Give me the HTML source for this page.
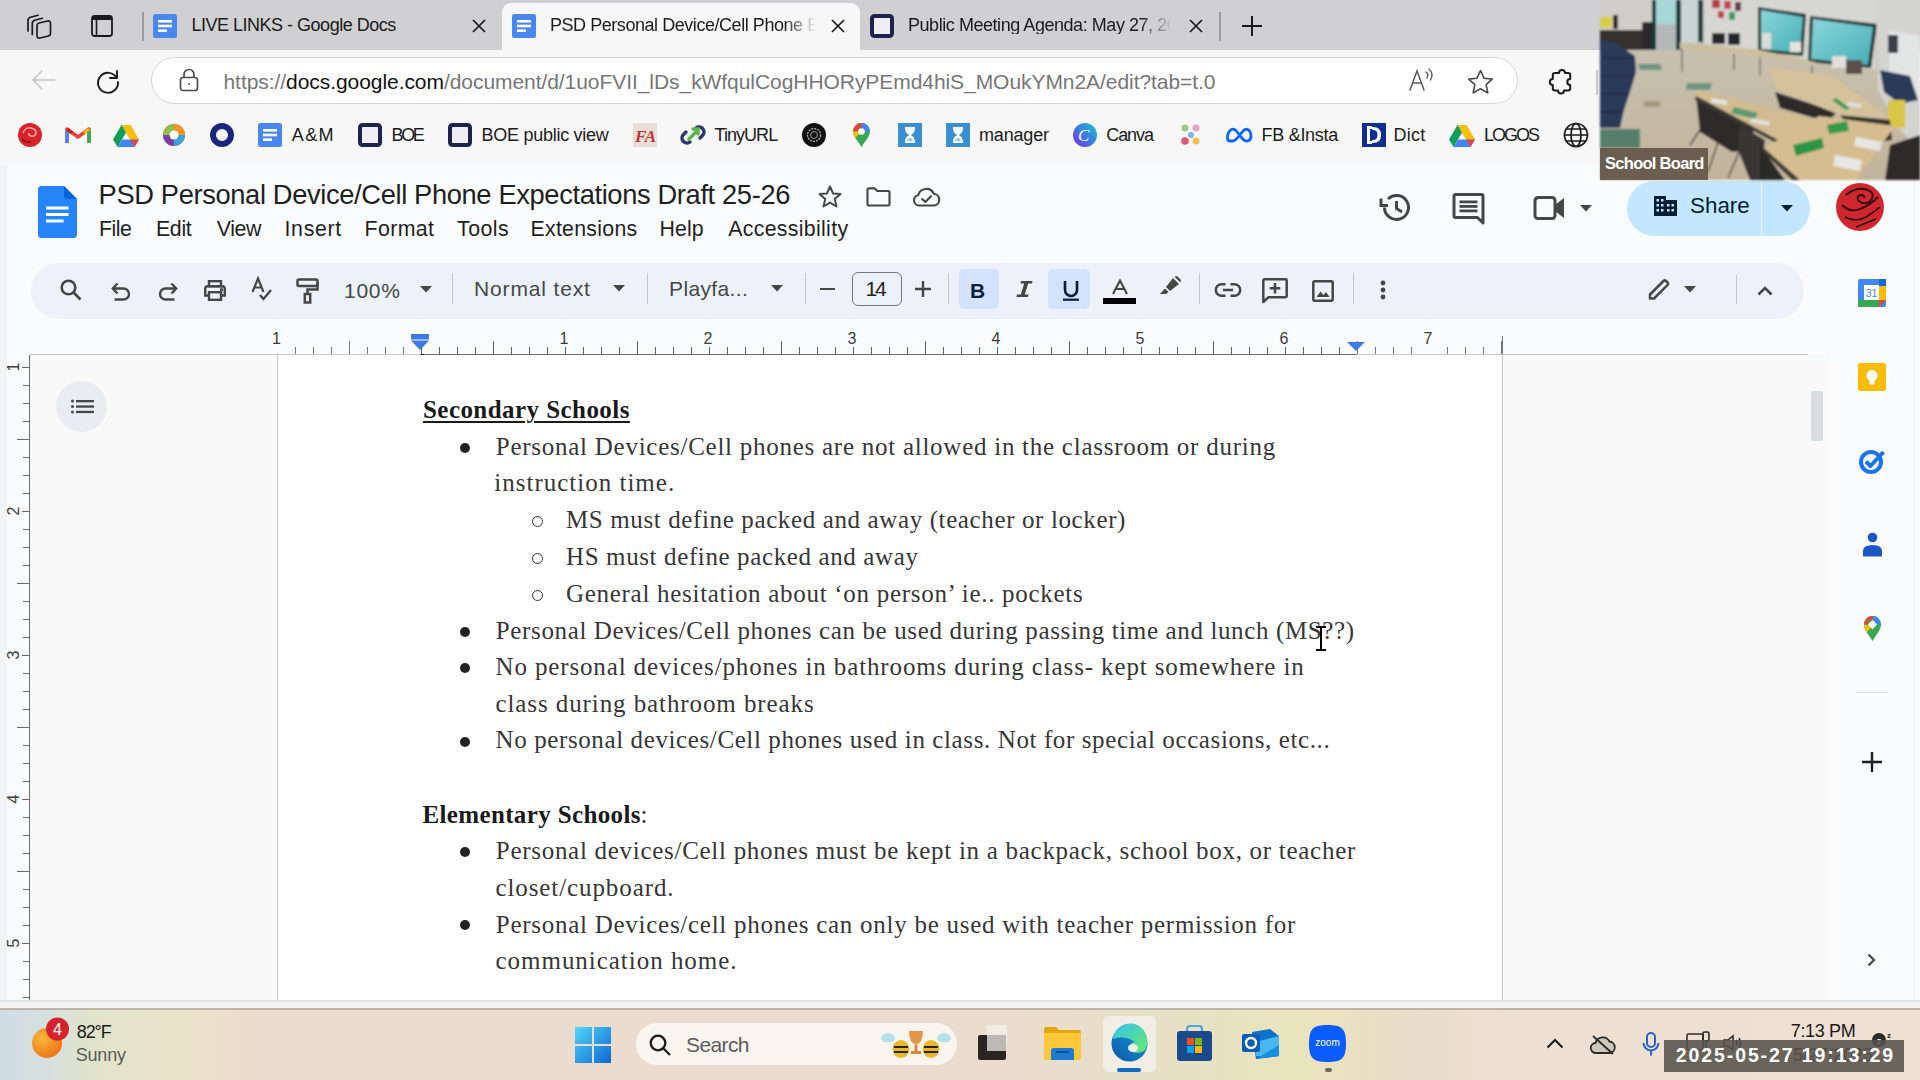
<!DOCTYPE html>
<html><head><meta charset="utf-8">
<style>
*{margin:0;padding:0;box-sizing:border-box}
html,body{width:1920px;height:1080px;overflow:hidden;background:#f9fbfd;font-family:"Liberation Sans",sans-serif;position:relative}
.a{position:absolute}
.t{position:absolute;white-space:nowrap;line-height:1}
svg{position:absolute;overflow:visible}
/* browser chrome */
#tabbar{left:0;top:0;width:1920px;height:50px;background:#d0cfd1}
#addr{left:0;top:50px;width:1920px;height:60px;background:#f7f7f7}
#bm{left:0;top:110px;width:1920px;height:55px;background:#f7f7f7}
#docshead{left:0;top:160px;width:1920px;height:100px;background:#f9fbfd}
#taskbar{left:0;top:1008px;width:1920px;height:72px;background:linear-gradient(90deg,#cfdce4 0px,#d5dfe0 40px,#e0e4cc 90px,#e9e2c8 180px,#ecdccf 260px,#ecdcd0 1000px,#e6dec8 1120px,#eae4bc 1300px,#e8ddcb 1420px,#eedfd3 1520px,#efe0d4 1920px)}
.doc{font-family:"Liberation Serif",serif;color:#333;font-size:24px}
</style></head><body>

<!-- TAB BAR -->
<div id="tabbar" class="a"></div>
<svg style="left:26px;top:13px" width="26" height="26" viewBox="0 0 26 26" fill="none" stroke="#1a1a1a" stroke-width="1.7" stroke-linejoin="round" stroke-linecap="round"><path d="M2 18V7.5Q2 5 4.5 4.3L12 2.2"/><path d="M6.3 21.5V10.5Q6.3 8 8.8 7.3L16.3 5.3"/><path d="M11 12.5Q11 10.5 13 10L21.5 8Q24.5 7.5 24.5 10.5V20.5Q24.5 22.5 22.5 23L14 25Q11 25.5 11 22.5Z"/></svg>
<svg style="left:91px;top:15px" width="22" height="22" viewBox="0 0 22 22"><rect x="1" y="1" width="20" height="20" rx="2.5" fill="none" stroke="#1a1a1a" stroke-width="1.8"/><rect x="1" y="1" width="20" height="4" fill="#1a1a1a"/><rect x="1" y="1" width="4" height="20" fill="none"/><line x1="5.5" y1="5" x2="5.5" y2="21" stroke="#1a1a1a" stroke-width="1.6"/></svg>
<div class="a" style="left:142px;top:12px;width:2px;height:29px;background:#9b9b9d"></div>
<svg style="left:153px;top:14px" width="24" height="24" viewBox="0 0 24 24"><rect x="0" y="0" width="24" height="24" rx="2.5" fill="#4a86f0"/><rect x="5" y="6" width="14" height="2.6" fill="#fff"/><rect x="5" y="10.7" width="14" height="2.6" fill="#fff"/><rect x="5" y="15.4" width="9" height="2.6" fill="#fff"/></svg>
<div class="t" id="tab1" style="left:191.5px;top:16.46px;font-size:18px;color:#1b1b1b;letter-spacing:-0.496px">LIVE LINKS - Google Docs</div>
<svg style="left:472px;top:19px" width="14" height="14" viewBox="0 0 14 14" stroke="#1a1a1a" stroke-width="1.7"><path d="M1 1L13 13M13 1L1 13"/></svg>
<div class="a" style="left:502px;top:3px;width:358px;height:50px;background:#f7f7f7;border-radius:9px 9px 0 0"></div>
<svg style="left:512px;top:14px" width="24" height="24" viewBox="0 0 24 24"><rect x="0" y="0" width="24" height="24" rx="2.5" fill="#4a86f0"/><rect x="5" y="6" width="14" height="2.6" fill="#fff"/><rect x="5" y="10.7" width="14" height="2.6" fill="#fff"/><rect x="5" y="15.4" width="9" height="2.6" fill="#fff"/></svg>
<div class="t" id="tab2" style="left:550px;top:16.46px;font-size:18px;letter-spacing:-0.45px;color:#1b1b1b;width:266px;overflow:hidden;-webkit-mask-image:linear-gradient(90deg,#000 88%,transparent 100%)">PSD Personal Device/Cell Phone Expectations</div>
<svg style="left:831px;top:19px" width="14" height="14" viewBox="0 0 14 14" stroke="#1a1a1a" stroke-width="1.7"><path d="M1 1L13 13M13 1L1 13"/></svg>
<svg style="left:870px;top:14px" width="24" height="24" viewBox="0 0 24 24"><rect x="2" y="2" width="20" height="20" rx="2.5" fill="#eeeef3" stroke="#1c2350" stroke-width="4"/></svg>
<div class="t" id="tab3" style="left:908px;top:16.46px;font-size:18px;letter-spacing:-0.45px;color:#1b1b1b;width:264px;overflow:hidden;-webkit-mask-image:linear-gradient(90deg,#000 88%,transparent 100%)">Public Meeting Agenda: May 27, 2025</div>
<svg style="left:1189px;top:19px" width="14" height="14" viewBox="0 0 14 14" stroke="#1a1a1a" stroke-width="1.7"><path d="M1 1L13 13M13 1L1 13"/></svg>
<div class="a" style="left:1219px;top:12px;width:2px;height:29px;background:#9b9b9d"></div>
<svg style="left:1241px;top:15px" width="22" height="22" viewBox="0 0 22 22" stroke="#1a1a1a" stroke-width="2"><path d="M11 1V21M1 11H21"/></svg>

<!-- ADDRESS BAR -->
<div id="addr" class="a"></div>
<svg style="left:31px;top:69px" width="26" height="22" viewBox="0 0 26 22" fill="none" stroke="#c4c4c4" stroke-width="1.6" stroke-linecap="round" stroke-linejoin="round"><path d="M24 11H2M11 2L2 11L11 20"/></svg>
<svg style="left:95px;top:68px" width="26" height="26" viewBox="0 0 26 26" fill="none" stroke="#1a1a1a" stroke-width="1.9" stroke-linecap="round"><path d="M21.5 9.5A10 10 0 1 0 23 14"/><path d="M22 3V10H15" stroke-linejoin="round"/></svg>
<div class="a" style="left:151px;top:57px;width:1367px;height:47px;background:#fff;border:1.5px solid #d6d6d6;border-radius:24px"></div>
<svg style="left:179px;top:68px" width="20" height="24" viewBox="0 0 20 24" fill="none" stroke="#4d4d4d" stroke-width="1.7"><rect x="1.5" y="9.5" width="17" height="13" rx="2.5"/><path d="M5 9.5V6.5a5 5 0 0 1 10 0V9.5"/><circle cx="10" cy="16" r="1" fill="#4d4d4d" stroke="none"/></svg>
<div class="t" id="url" style="left:223.5px;top:70.72px;font-size:21px;color:#767676;letter-spacing:-0.060px">https://<span style="color:#111">docs.google.com</span>/document/d/1uoFVII_lDs_kWfqulCogHHORyPEmd4hiS_MOukYMn2A/edit?tab=t.0</div>
<svg style="left:1409px;top:68px" width="26" height="24" viewBox="0 0 26 24" fill="none" stroke="#5a5a5a" stroke-width="1.5" stroke-linecap="round"><path d="M1 22L8 3L15 22M3.8 15H12.2"/><path d="M17 4q3 2.5 1 6M20 1q5 4.5 1.5 11"/></svg>
<svg style="left:1467px;top:69px" width="27" height="26" viewBox="0 0 27 26" fill="none" stroke="#4a4a4a" stroke-width="1.6" stroke-linejoin="round"><path d="M13.5 1.5L17 9.2L25.3 10.1L19.1 15.7L20.8 23.9L13.5 19.8L6.2 23.9L7.9 15.7L1.7 10.1L10 9.2Z"/></svg>
<svg style="left:1549px;top:69px" width="24" height="26" viewBox="0 0 24 26" fill="none" stroke="#1a1a1a" stroke-width="2" stroke-linejoin="round"><path d="M5.8 4.1H10A3 3 0 0 1 16 4.1H19.2Q21.2 4.1 21.2 6.1V10.1A2.9 2.9 0 0 0 21.2 15.9V19.4Q21.2 21.4 19.2 21.4H15A3 3 0 0 1 9 21.4H5.8Q3.8 21.4 3.8 19.4V15.9A2.9 2.9 0 0 1 3.8 10.1V6.1Q3.8 4.1 5.8 4.1Z"/></svg><div class="a" style="left:1596px;top:70px;width:1.5px;height:25px;background:#c8c8c8"></div>

<!-- BOOKMARKS -->
<div id="bm" class="a"></div>
<svg style="left:17px;top:122px" width="26" height="26" viewBox="0 0 26 26"><circle cx="13" cy="13" r="12" fill="#d8232a"/><path d="M6 11q2-6 8-5q5 1 5 5q-1 4-5 3q-3-1-2-3" fill="none" stroke="#ffb3b3" stroke-width="1.4"/><path d="M5 17q4 4 9 3" fill="none" stroke="#8a0f14" stroke-width="1.5"/></svg>
<svg style="left:66px;top:126px" width="24" height="18" viewBox="0 0 24 18"><path d="M1 17V3L12 11L23 3V17" fill="none" stroke="#ea4335" stroke-width="3.5" stroke-linejoin="round"/><path d="M1 17V5" stroke="#4285f4" stroke-width="3.5"/><path d="M23 17V5" stroke="#34a853" stroke-width="3.5"/><path d="M1 3L6 7" stroke="#c5221f" stroke-width="3"/><path d="M23 3L18 7" stroke="#fbbc04" stroke-width="3"/></svg>
<svg style="left:113px;top:124px" width="26" height="23" viewBox="0 0 26 23"><path d="M8.5 1H17.5L26 15.5H17Z" fill="#fbbc04"/><path d="M8.5 1L0 15.5L4.5 23L13 8.5Z" fill="#0f9d58"/><path d="M4.5 23H21.5L26 15.5H9Z" fill="#4285f4"/><path d="M8.5 1H17.5L13 8.5Z" fill="#e8a400" opacity="0"/><path d="M17 15.5H26L21.5 23Z" fill="#ea4335" opacity=".9"/></svg>
<svg style="left:162px;top:123px" width="24" height="24" viewBox="0 0 24 24"><circle cx="12" cy="12" r="11" fill="#e94e77"/><path d="M12 1A11 11 0 0 1 23 12H12Z" fill="#f7931e"/><path d="M23 12A11 11 0 0 1 12 23V12Z" fill="#3aa0d8"/><path d="M1 12A11 11 0 0 1 12 1V12Z" fill="#8bc34a"/><path d="M1 12A11 11 0 0 0 12 23V12Z" fill="#7b3fa0"/><circle cx="12" cy="12" r="4.5" fill="#fff"/></svg>
<svg style="left:210px;top:123px" width="24" height="24" viewBox="0 0 24 24"><circle cx="12" cy="12" r="9" fill="none" stroke="#1a2580" stroke-width="6"/></svg>
<svg style="left:258px;top:123px" width="24" height="24" viewBox="0 0 24 24"><rect x="0" y="0" width="24" height="24" rx="2.5" fill="#4a86f0"/><rect x="5" y="6" width="14" height="2.6" fill="#fff"/><rect x="5" y="10.7" width="14" height="2.6" fill="#fff"/><rect x="5" y="15.4" width="9" height="2.6" fill="#fff"/></svg>
<div class="t" id="bm1" style="left:291.8px;top:126.01px;font-size:18px;color:#1b1b1b;letter-spacing:1.375px">A&amp;M</div>
<svg style="left:358px;top:123px" width="24" height="24" viewBox="0 0 24 24"><rect x="2" y="2" width="20" height="20" rx="2.5" fill="#eeeef3" stroke="#1c2350" stroke-width="4"/></svg>
<div class="t" id="bm2" style="left:391.5px;top:126.01px;font-size:18px;color:#1b1b1b;letter-spacing:-2.375px">BOE</div>
<svg style="left:448px;top:123px" width="24" height="24" viewBox="0 0 24 24"><rect x="2" y="2" width="20" height="20" rx="2.5" fill="#eeeef3" stroke="#1c2350" stroke-width="4"/></svg>
<div class="t" id="bm3" style="left:481.5px;top:126.01px;font-size:18px;color:#1b1b1b;letter-spacing:-0.268px">BOE public view</div>
<svg style="left:633px;top:123px" width="24" height="24" viewBox="0 0 24 24"><rect width="24" height="24" fill="#e9ddd8"/><text x="2" y="19" font-family="Liberation Serif" font-style="italic" font-weight="bold" font-size="17" fill="#b8363a">FA</text></svg>
<svg style="left:680px;top:123px" width="26" height="24" viewBox="0 0 26 24" fill="none" stroke-width="3.4" stroke-linecap="round"><path d="M10 19a5 5 0 0 1-7-7l3-3" stroke="#2a3470"/><path d="M16 5a5 5 0 0 1 7 7l-3 3" stroke="#2a3470"/><path d="M9 16L18 7M13 6h5v5" stroke="#5fb548"/></svg>
<div class="t" id="bm4" style="left:714.6px;top:126.01px;font-size:18px;color:#1b1b1b;letter-spacing:-0.966px">TinyURL</div>
<svg style="left:802px;top:123px" width="24" height="24" viewBox="0 0 24 24"><circle cx="12" cy="12" r="12" fill="#111"/><circle cx="12" cy="12" r="6.5" fill="none" stroke="#bbb" stroke-width="1.2" stroke-dasharray="2 1"/><circle cx="12" cy="12" r="3.5" fill="none" stroke="#999" stroke-width="1"/></svg>
<svg style="left:852px;top:122px" width="19" height="26" viewBox="0 0 19 26"><path d="M9.5 25C6 19 1 14.5 1 9.5A8.5 8.5 0 0 1 18 9.5C18 14.5 13 19 9.5 25Z" fill="#34a853"/><path d="M1 9.5A8.5 8.5 0 0 1 9.5 1L9.5 9.5Z" fill="#ea4335"/><path d="M9.5 1A8.5 8.5 0 0 1 18 9.5H9.5Z" fill="#4285f4"/><path d="M1 9.5C1 12 2 14 3.5 16L9.5 9.5Z" fill="#fbbc04"/><circle cx="9.5" cy="9.5" r="3.3" fill="#fff"/></svg>
<svg style="left:898px;top:123px" width="24" height="24" viewBox="0 0 24 24"><rect width="24" height="24" fill="#3a8fd0"/><path d="M7 4H17V5Q17 10 12.8 12Q17 14 17 19V20H7V19Q7 14 11.2 12Q7 10 7 5Z" fill="#fff"/><path d="M9 18Q10 15 12 14.5Q14 15 15 18Z" fill="#9cc7ea"/></svg><svg style="left:946px;top:123px" width="24" height="24" viewBox="0 0 24 24"><rect width="24" height="24" fill="#3a8fd0"/><path d="M7 4H17V5Q17 10 12.8 12Q17 14 17 19V20H7V19Q7 14 11.2 12Q7 10 7 5Z" fill="#fff"/><path d="M9 18Q10 15 12 14.5Q14 15 15 18Z" fill="#9cc7ea"/></svg>
<div class="t" id="bm5" style="left:979.0px;top:126.01px;font-size:18px;color:#1b1b1b;letter-spacing:-0.167px">manager</div>
<svg style="left:1073px;top:123px" width="24" height="24" viewBox="0 0 24 24"><defs><linearGradient id="cg" x1="0" y1="1" x2="1" y2="0"><stop offset="0" stop-color="#7d2ae8"/><stop offset=".5" stop-color="#3b7de0"/><stop offset="1" stop-color="#20c4cb"/></linearGradient></defs><circle cx="12" cy="12" r="12" fill="url(#cg)"/><text x="5" y="18" font-family="Liberation Serif" font-style="italic" font-size="17" fill="#fff">C</text></svg>
<div class="t" id="bm6" style="left:1106.3px;top:126.01px;font-size:18px;color:#1b1b1b;letter-spacing:-1.100px">Canva</div>
<svg style="left:1180px;top:123px" width="22" height="24" viewBox="0 0 22 24"><circle cx="5" cy="5" r="3.5" fill="#9cc97a"/><circle cx="16" cy="5" r="3.5" fill="#e8a2c0"/><circle cx="5" cy="18" r="3.8" fill="#e0557a"/><circle cx="16" cy="18" r="3.5" fill="#f2c24e"/><circle cx="11" cy="12" r="3" fill="#7fb0e8"/></svg>
<svg style="left:1226px;top:127px" width="27" height="16" viewBox="0 0 27 16"><path d="M4 14C1 14 1 10 2 7C3.5 3 6 1.5 8.5 2.5C11 3.5 15.5 12 18.5 13.5C21 14.8 25 14 25 9C25 4 22 1.5 19 2.5C16.5 3.5 11 12.5 8.5 13.5C7 14.2 5.5 14 4 14Z" fill="none" stroke="#0866ff" stroke-width="2.8"/></svg>
<div class="t" id="bm7" style="left:1261.6px;top:126.01px;font-size:18px;color:#1b1b1b;letter-spacing:-0.300px">FB &amp;Insta</div>
<svg style="left:1362px;top:123px" width="24" height="24" viewBox="0 0 24 24"><rect width="24" height="24" fill="#0e2f8f"/><path d="M6 4H11Q19 4 19 12Q19 20 11 20H6Z" fill="#fff"/><path d="M9 7H11Q15.5 7 15.5 12Q15.5 17 11 17H9Z" fill="#0e2f8f"/><rect x="5" y="3" width="5" height="18" fill="#fff"/><rect x="8" y="6" width="2.2" height="12" fill="#0e2f8f"/></svg>
<div class="t" id="bm8" style="left:1393.4px;top:126.01px;font-size:18px;color:#1b1b1b;letter-spacing:0.267px">Dict</div>
<svg style="left:1449px;top:124px" width="26" height="23" viewBox="0 0 26 23"><path d="M8.5 1H17.5L26 15.5H17Z" fill="#fbbc04"/><path d="M8.5 1L0 15.5L4.5 23L13 8.5Z" fill="#0f9d58"/><path d="M4.5 23H21.5L26 15.5H9Z" fill="#4285f4"/><path d="M8.5 1H17.5L13 8.5Z" fill="#e8a400" opacity="0"/><path d="M17 15.5H26L21.5 23Z" fill="#ea4335" opacity=".9"/></svg>
<div class="t" id="bm9" style="left:1484.0px;top:126.01px;font-size:18px;color:#1b1b1b;letter-spacing:-2.000px">LOGOS</div>
<svg style="left:1563px;top:122px" width="26" height="26" viewBox="0 0 26 26" fill="none" stroke="#1a1a1a" stroke-width="1.7"><circle cx="13" cy="13" r="11.5"/><ellipse cx="13" cy="13" rx="5" ry="11.5"/><path d="M1.5 13H24.5M3.5 7H22.5M3.5 19H22.5"/></svg>

<!-- DOCS HEADER -->
<svg style="left:38px;top:186px" width="39" height="52" viewBox="0 0 39 52"><path d="M3.5 0H26L39 13V48.5A3.5 3.5 0 0 1 35.5 52H3.5A3.5 3.5 0 0 1 0 48.5V3.5A3.5 3.5 0 0 1 3.5 0Z" fill="#2684fc"/><path d="M26 0L39 13H29.5A3.5 3.5 0 0 1 26 9.5Z" fill="#0066da"/><rect x="8" y="20.5" width="22.5" height="3" fill="#fff"/><rect x="8" y="27" width="22.5" height="3" fill="#fff"/><rect x="8" y="33.5" width="17.5" height="3" fill="#fff"/></svg>
<div class="t" id="title" style="left:98.6px;top:181.49px;font-size:27.3px;color:#1f1f1f;letter-spacing:-0.367px">PSD Personal Device/Cell Phone Expectations Draft 25-26</div>
<svg style="left:818px;top:185px" width="24" height="23" viewBox="0 0 24 23" fill="none" stroke="#444746" stroke-width="2" stroke-linejoin="round"><path d="M12 1.5L15 8.4L22.5 9.1L16.8 14.1L18.5 21.5L12 17.6L5.5 21.5L7.2 14.1L1.5 9.1L9 8.4Z"/></svg>
<svg style="left:866px;top:187px" width="25" height="20" viewBox="0 0 25 20" fill="none" stroke="#444746" stroke-width="2.1" stroke-linejoin="round"><path d="M1.5 2.6A1.2 1.2 0 0 1 2.7 1.4H8.8L11.3 4H22.3A1.2 1.2 0 0 1 23.5 5.2V17.3A1.2 1.2 0 0 1 22.3 18.5H2.7A1.2 1.2 0 0 1 1.5 17.3Z"/></svg>
<svg style="left:912px;top:187px" width="29" height="20" viewBox="0 0 29 20" fill="none" stroke="#444746" stroke-width="2.1" stroke-linejoin="round" stroke-linecap="round"><path d="M7 18.5A5.2 5.2 0 0 1 6.2 8.2A8.3 8.3 0 0 1 21.8 6.8A5.9 5.9 0 0 1 22.3 18.5Z"/><path d="M10.2 12L13.3 15L19 9.2"/></svg>
<div class="t" id="m_file" style="left:99.0px;top:218.67px;font-size:21.3px;color:#1f1f1f;letter-spacing:-0.500px">File</div>
<div class="t" id="m_edit" style="left:156.0px;top:218.67px;font-size:21.3px;color:#1f1f1f;letter-spacing:-0.333px">Edit</div>
<div class="t" id="m_view" style="left:216.7px;top:218.67px;font-size:21.3px;color:#1f1f1f;letter-spacing:-0.367px">View</div>
<div class="t" id="m_insert" style="left:284.5px;top:218.67px;font-size:21.3px;color:#1f1f1f;letter-spacing:0.700px">Insert</div>
<div class="t" id="m_format" style="left:364.5px;top:218.67px;font-size:21.3px;color:#1f1f1f;letter-spacing:0.400px">Format</div>
<div class="t" id="m_tools" style="left:457.0px;top:218.67px;font-size:21.3px;color:#1f1f1f;letter-spacing:0.500px">Tools</div>
<div class="t" id="m_ext" style="left:530.5px;top:218.67px;font-size:21.3px;color:#1f1f1f;letter-spacing:0.278px">Extensions</div>
<div class="t" id="m_help" style="left:659.6px;top:218.67px;font-size:21.3px;color:#1f1f1f;letter-spacing:0.066px">Help</div>
<div class="t" id="m_acc" style="left:728.2px;top:218.67px;font-size:21.3px;color:#1f1f1f;letter-spacing:0.325px">Accessibility</div>
<svg style="left:1379px;top:192px" width="32" height="31" viewBox="0 0 32 31" fill="none" stroke="#444746" stroke-width="3" stroke-linecap="butt"><path d="M5.5 15.5A12 12 0 1 0 9 7"/><path d="M2 6.5V13.5H9" stroke-linejoin="miter"/><path d="M17.5 9V16.5L23 20"/></svg>
<svg style="left:1453px;top:193px" width="31" height="31" viewBox="0 0 31 31"><path d="M2.5 1.5H28.5A1.5 1.5 0 0 1 30 3V30L24.5 24.5H2.5A1.5 1.5 0 0 1 1 23V3A1.5 1.5 0 0 1 2.5 1.5Z" fill="none" stroke="#444746" stroke-width="3" stroke-linejoin="round"/><rect x="6.5" y="7.5" width="18" height="2.8" fill="#444746"/><rect x="6.5" y="12" width="18" height="2.8" fill="#444746"/><rect x="6.5" y="16.5" width="18" height="2.8" fill="#444746"/></svg>
<svg style="left:1533px;top:196px" width="32" height="24" viewBox="0 0 32 24"><path d="M2 4.5A3 3 0 0 1 5 1.5H19A3 3 0 0 1 22 4.5V19.5A3 3 0 0 1 19 22.5H5A3 3 0 0 1 2 19.5Z" fill="none" stroke="#444746" stroke-width="3"/><path d="M22 9L31 2V22L22 15Z" fill="#444746"/><path d="M6 1.5L2 6V4.5Z" fill="#444746"/></svg>
<svg style="left:1580px;top:205px" width="12" height="7" viewBox="0 0 12 7"><path d="M0 0H12L6 6.5Z" fill="#444746"/></svg>
<div class="a" style="left:1627px;top:181px;width:183px;height:55px;background:#c2e7ff;border-radius:28px"></div>
<div class="a" style="left:1761px;top:181px;width:1px;height:55px;background:#f9fbfd;opacity:.7"></div>
<svg style="left:1654px;top:196px" width="23" height="20" viewBox="0 0 23 20"><path d="M0 0H12V4H23V20H0Z" fill="#001d35"/><g fill="#c2e7ff"><rect x="2.5" y="3" width="2.5" height="2.5"/><rect x="7" y="3" width="2.5" height="2.5"/><rect x="2.5" y="8" width="2.5" height="2.5"/><rect x="7" y="8" width="2.5" height="2.5"/><rect x="2.5" y="13" width="2.5" height="2.5"/><rect x="7" y="13" width="2.5" height="2.5"/><rect x="13" y="8" width="2.5" height="2.5"/><rect x="17.5" y="8" width="2.5" height="2.5"/><rect x="13" y="13" width="2.5" height="2.5"/><rect x="17.5" y="13" width="2.5" height="2.5"/></g></svg>
<div class="t" id="share" style="left:1690.0px;top:195.44px;font-size:22.4px;color:#001d35;letter-spacing:0.000px">Share</div>
<svg style="left:1781px;top:205px" width="12" height="7" viewBox="0 0 12 7"><path d="M0 0H12L6 6.5Z" fill="#001d35"/></svg>
<svg style="left:1836px;top:183px" width="48" height="48" viewBox="0 0 48 48"><circle cx="24" cy="24" r="24" fill="#d0262e"/><path d="M10 12Q22 2 34 8Q40 13 33 19Q26 22 22 17Q20 13 25 12Q29 12 28 15" fill="none" stroke="#2a0a0c" stroke-width="1.8"/><path d="M6 22Q14 30 24 26Q34 22 42 14" fill="none" stroke="#2a0a0c" stroke-width="1.8"/><path d="M9 34Q20 40 30 34Q38 29 44 24" fill="none" stroke="#2a0a0c" stroke-width="1.6"/><path d="M20 44Q30 40 40 36" fill="none" stroke="#2a0a0c" stroke-width="1.4"/></svg>

<!-- TOOLBAR -->
<div class="a" style="left:31px;top:263px;width:1773px;height:56px;background:#edf2fa;border-radius:28px"></div>
<svg style="left:60px;top:279px" width="22" height="22" viewBox="0 0 22 22" fill="none" stroke="#444746" stroke-width="2.6"><circle cx="8.5" cy="8.5" r="6.8"/><path d="M13.5 13.5L20.5 20.5"/></svg>
<svg style="left:111px;top:282px" width="20" height="18" viewBox="0 0 20 18" fill="none" stroke="#444746" stroke-width="2.4"><path d="M2 6.5H12.5A5.5 5.5 0 0 1 12.5 17.5H3.5"/><path d="M6.5 1.5L1.8 6.5L6.5 11.5"/></svg>
<svg style="left:158px;top:282px" width="20" height="18" viewBox="0 0 20 18" fill="none" stroke="#444746" stroke-width="2.4"><path d="M18 6.5H7.5A5.5 5.5 0 0 0 7.5 17.5H16.5"/><path d="M13.5 1.5L18.2 6.5L13.5 11.5"/></svg>
<svg style="left:203px;top:280px" width="24" height="21" viewBox="0 0 24 21" fill="none" stroke="#444746" stroke-width="2.4"><rect x="6" y="1.2" width="12" height="5"/><path d="M6 15.5H2.2V8.5A2.5 2.5 0 0 1 4.7 6.2H19.3A2.5 2.5 0 0 1 21.8 8.5V15.5H18"/><rect x="6" y="12.2" width="12" height="7.6"/><circle cx="18.5" cy="9.8" r=".6" fill="#444746"/></svg>
<svg style="left:251px;top:277px" width="21" height="24" viewBox="0 0 21 24" fill="none" stroke="#444746" stroke-width="2.2"><path d="M1.5 15L7 1.5L12.5 15M3.5 10.5H10.5"/><path d="M9 18L12.5 22L20 13" stroke-width="2.4"/></svg>
<svg style="left:296px;top:278px" width="23" height="26" viewBox="0 0 23 26" fill="none" stroke="#444746" stroke-width="2.5"><rect x="1.5" y="1.5" width="20" height="6.5" rx="1.5"/><path d="M21.5 4.8V11.5H11.5V16"/><rect x="8.8" y="16" width="5.4" height="8.5"/></svg>
<div class="t" id="zoom" style="left:344.0px;top:279.82px;font-size:21px;color:#444746;letter-spacing:0.700px">100%</div>
<svg style="left:420px;top:286px" width="12" height="7" viewBox="0 0 12 7"><path d="M0 0H12L6 6.5Z" fill="#444746"/></svg><div class="a" style="left:452px;top:273px;width:1px;height:31px;background:#c7c7c7"></div>
<div class="t" id="normal" style="left:474.0px;top:277.82px;font-size:21px;color:#444746;letter-spacing:0.850px">Normal text</div>
<svg style="left:613px;top:285px" width="12" height="7" viewBox="0 0 12 7"><path d="M0 0H12L6 6.5Z" fill="#444746"/></svg><div class="a" style="left:647px;top:273px;width:1px;height:31px;background:#c7c7c7"></div>
<div class="t" id="playfa" style="left:669.0px;top:277.82px;font-size:21px;color:#444746;letter-spacing:0.375px">Playfa...</div>
<svg style="left:771px;top:285px" width="12" height="7" viewBox="0 0 12 7"><path d="M0 0H12L6 6.5Z" fill="#444746"/></svg><div class="a" style="left:805px;top:273px;width:1px;height:31px;background:#c7c7c7"></div>
<div class="a" style="left:820px;top:288px;width:15px;height:2.4px;background:#444746"></div>
<div class="a" style="left:852px;top:272px;width:50px;height:34px;border:1.3px solid #747775;border-radius:6px"></div>
<div class="t" id="fs14" style="left:865.6px;top:278.22px;font-size:21px;color:#1f1f1f;letter-spacing:-2.300px">14</div>
<svg style="left:915px;top:281px" width="16" height="16" viewBox="0 0 16 16" stroke="#444746" stroke-width="2.4"><path d="M8 0V16M0 8H16"/></svg>
<div class="a" style="left:948px;top:273px;width:1px;height:31px;background:#c7c7c7"></div>
<div class="a" style="left:959px;top:269px;width:40px;height:40px;background:#d3e3fd;border-radius:5px"></div>
<div class="t" id="bB" style="left:970px;top:280px;font-size:21px;font-weight:bold;color:#0b1d3c">B</div>
<svg style="left:1015px;top:281px" width="18" height="16" viewBox="0 0 18 16" fill="#444746"><path d="M6 0H17.5L17 2.4H13.2L9.8 13.6H13.5L13 16H1.5L2 13.6H5.8L9.2 2.4H5.5Z"/></svg>
<div class="a" style="left:1048px;top:269px;width:42px;height:40px;background:#d3e3fd;border-radius:5px"></div>
<svg style="left:1062px;top:281px" width="18" height="20" viewBox="0 0 18 20" fill="none" stroke="#0b1d3c" stroke-width="2.6"><path d="M3 0V9A6 6 0 0 0 15 9V0"/><path d="M1 18.7H17" stroke-width="2.2"/></svg>
<svg style="left:1112px;top:280px" width="16" height="14" viewBox="0 0 16 14" fill="none" stroke="#444746" stroke-width="2.1"><path d="M1 14L8 0.5L15 14M3.7 9H12.3"/></svg>
<div class="a" style="left:1103px;top:298px;width:33px;height:5.5px;background:#000"></div>
<svg style="left:1160px;top:276px" width="21" height="18" viewBox="0 0 21 18"><path d="M13 2L19 8L10 15L6 11Z" fill="#444746"/><path d="M14.5 0.8L17 0L21 4L20.3 6.5Z" fill="#444746"/><path d="M5 12.5L8.5 16L6 18H0Z" fill="#444746"/></svg>
<div class="a" style="left:1199px;top:273px;width:1px;height:31px;background:#c7c7c7"></div>
<svg style="left:1215px;top:283px" width="26" height="14" viewBox="0 0 26 14" fill="none" stroke="#444746" stroke-width="2.5"><path d="M10.5 1.3H6.5A5.7 5.7 0 0 0 6.5 12.7H10.5M15.5 1.3H19.5A5.7 5.7 0 0 1 19.5 12.7H15.5M8 7H18"/></svg>
<svg style="left:1262px;top:278px" width="26" height="25" viewBox="0 0 26 25" fill="none" stroke="#444746" stroke-width="2.5"><path d="M2.5 1.3H23.5A1.2 1.2 0 0 1 24.7 2.5V18A1.2 1.2 0 0 1 23.5 19.2H6.5L1.3 24V2.5A1.2 1.2 0 0 1 2.5 1.3Z" stroke-linejoin="round"/><path d="M13 5V15.5M7.7 10.2H18.3"/></svg>
<svg style="left:1312px;top:280px" width="22" height="22" viewBox="0 0 22 22"><rect x="1.3" y="1.3" width="19.4" height="19.4" rx="1.5" fill="none" stroke="#444746" stroke-width="2.5"/><path d="M4.5 17L8.5 11.5L11.5 15L14 12L17.5 17Z" fill="#444746"/></svg>
<div class="a" style="left:1353px;top:273px;width:1px;height:31px;background:#c7c7c7"></div>
<svg style="left:1380px;top:280px" width="6" height="20" viewBox="0 0 6 20" fill="#444746"><circle cx="3" cy="3" r="2.4"/><circle cx="3" cy="10" r="2.4"/><circle cx="3" cy="17" r="2.4"/></svg>
<svg style="left:1648px;top:278px" width="23" height="22" viewBox="0 0 23 22" fill="none" stroke="#444746" stroke-width="2.5" stroke-linejoin="round"><path d="M2 20.5V16.5L15.5 3A1.8 1.8 0 0 1 18 3L19.5 4.5A1.8 1.8 0 0 1 19.5 7L6 20.5Z"/></svg>
<svg style="left:1684px;top:286px" width="12" height="7" viewBox="0 0 12 7"><path d="M0 0H12L6 6.5Z" fill="#444746"/></svg><div class="a" style="left:1736px;top:275px;width:1px;height:29px;background:#c7c7c7"></div>
<svg style="left:1757px;top:286px" width="16" height="10" viewBox="0 0 16 10" fill="none" stroke="#444746" stroke-width="2.6"><path d="M1.5 8.5L8 2L14.5 8.5"/></svg>
<!-- RULER -->
<div class="a" style="left:30px;top:354px;width:390px;height:1px;background:#c6c6c6"></div>
<div class="a" style="left:420px;top:354px;width:937px;height:1.2px;background:#6e6e6e"></div>
<div class="a" style="left:1357px;top:354px;width:451px;height:1px;background:#c6c6c6"></div>
<div class="a" style="left:295.0px;top:347px;width:1px;height:7px;background:#777"></div>
<div class="a" style="left:313.0px;top:347px;width:1px;height:7px;background:#777"></div>
<div class="a" style="left:331.0px;top:347px;width:1px;height:7px;background:#777"></div>
<div class="a" style="left:349.0px;top:341px;width:1px;height:13px;background:#777"></div>
<div class="a" style="left:367.0px;top:347px;width:1px;height:7px;background:#777"></div>
<div class="a" style="left:385.0px;top:347px;width:1px;height:7px;background:#777"></div>
<div class="a" style="left:403.0px;top:347px;width:1px;height:7px;background:#777"></div>
<div class="a" style="left:439.0px;top:347px;width:1px;height:7px;background:#5f5f5f"></div>
<div class="a" style="left:457.0px;top:347px;width:1px;height:7px;background:#5f5f5f"></div>
<div class="a" style="left:475.0px;top:347px;width:1px;height:7px;background:#5f5f5f"></div>
<div class="a" style="left:493.0px;top:341px;width:1px;height:13px;background:#5f5f5f"></div>
<div class="a" style="left:511.0px;top:347px;width:1px;height:7px;background:#5f5f5f"></div>
<div class="a" style="left:529.0px;top:347px;width:1px;height:7px;background:#5f5f5f"></div>
<div class="a" style="left:547.0px;top:347px;width:1px;height:7px;background:#5f5f5f"></div>
<div class="a" style="left:583.0px;top:347px;width:1px;height:7px;background:#5f5f5f"></div>
<div class="a" style="left:601.0px;top:347px;width:1px;height:7px;background:#5f5f5f"></div>
<div class="a" style="left:619.0px;top:347px;width:1px;height:7px;background:#5f5f5f"></div>
<div class="a" style="left:637.0px;top:341px;width:1px;height:13px;background:#5f5f5f"></div>
<div class="a" style="left:655.0px;top:347px;width:1px;height:7px;background:#5f5f5f"></div>
<div class="a" style="left:673.0px;top:347px;width:1px;height:7px;background:#5f5f5f"></div>
<div class="a" style="left:691.0px;top:347px;width:1px;height:7px;background:#5f5f5f"></div>
<div class="a" style="left:727.0px;top:347px;width:1px;height:7px;background:#5f5f5f"></div>
<div class="a" style="left:745.0px;top:347px;width:1px;height:7px;background:#5f5f5f"></div>
<div class="a" style="left:763.0px;top:347px;width:1px;height:7px;background:#5f5f5f"></div>
<div class="a" style="left:781.0px;top:341px;width:1px;height:13px;background:#5f5f5f"></div>
<div class="a" style="left:799.0px;top:347px;width:1px;height:7px;background:#5f5f5f"></div>
<div class="a" style="left:817.0px;top:347px;width:1px;height:7px;background:#5f5f5f"></div>
<div class="a" style="left:835.0px;top:347px;width:1px;height:7px;background:#5f5f5f"></div>
<div class="a" style="left:871.0px;top:347px;width:1px;height:7px;background:#5f5f5f"></div>
<div class="a" style="left:889.0px;top:347px;width:1px;height:7px;background:#5f5f5f"></div>
<div class="a" style="left:907.0px;top:347px;width:1px;height:7px;background:#5f5f5f"></div>
<div class="a" style="left:925.0px;top:341px;width:1px;height:13px;background:#5f5f5f"></div>
<div class="a" style="left:943.0px;top:347px;width:1px;height:7px;background:#5f5f5f"></div>
<div class="a" style="left:961.0px;top:347px;width:1px;height:7px;background:#5f5f5f"></div>
<div class="a" style="left:979.0px;top:347px;width:1px;height:7px;background:#5f5f5f"></div>
<div class="a" style="left:1015.0px;top:347px;width:1px;height:7px;background:#5f5f5f"></div>
<div class="a" style="left:1033.0px;top:347px;width:1px;height:7px;background:#5f5f5f"></div>
<div class="a" style="left:1051.0px;top:347px;width:1px;height:7px;background:#5f5f5f"></div>
<div class="a" style="left:1069.0px;top:341px;width:1px;height:13px;background:#5f5f5f"></div>
<div class="a" style="left:1087.0px;top:347px;width:1px;height:7px;background:#5f5f5f"></div>
<div class="a" style="left:1105.0px;top:347px;width:1px;height:7px;background:#5f5f5f"></div>
<div class="a" style="left:1123.0px;top:347px;width:1px;height:7px;background:#5f5f5f"></div>
<div class="a" style="left:1159.0px;top:347px;width:1px;height:7px;background:#5f5f5f"></div>
<div class="a" style="left:1177.0px;top:347px;width:1px;height:7px;background:#5f5f5f"></div>
<div class="a" style="left:1195.0px;top:347px;width:1px;height:7px;background:#5f5f5f"></div>
<div class="a" style="left:1213.0px;top:341px;width:1px;height:13px;background:#5f5f5f"></div>
<div class="a" style="left:1231.0px;top:347px;width:1px;height:7px;background:#5f5f5f"></div>
<div class="a" style="left:1249.0px;top:347px;width:1px;height:7px;background:#5f5f5f"></div>
<div class="a" style="left:1267.0px;top:347px;width:1px;height:7px;background:#5f5f5f"></div>
<div class="a" style="left:1303.0px;top:347px;width:1px;height:7px;background:#5f5f5f"></div>
<div class="a" style="left:1321.0px;top:347px;width:1px;height:7px;background:#5f5f5f"></div>
<div class="a" style="left:1339.0px;top:347px;width:1px;height:7px;background:#5f5f5f"></div>
<div class="a" style="left:1357.0px;top:341px;width:1px;height:13px;background:#777"></div>
<div class="a" style="left:1375.0px;top:347px;width:1px;height:7px;background:#777"></div>
<div class="a" style="left:1393.0px;top:347px;width:1px;height:7px;background:#777"></div>
<div class="a" style="left:1411.0px;top:347px;width:1px;height:7px;background:#777"></div>
<div class="a" style="left:1447.0px;top:347px;width:1px;height:7px;background:#777"></div>
<div class="a" style="left:1465.0px;top:347px;width:1px;height:7px;background:#777"></div>
<div class="a" style="left:1483.0px;top:347px;width:1px;height:7px;background:#777"></div>
<div class="a" style="left:1501.0px;top:341px;width:1px;height:13px;background:#777"></div>
<div class="a" style="left:1501.5px;top:336px;width:1px;height:18px;background:#777"></div>
<div class="t" style="left:270.5px;top:331px;width:12px;text-align:center;font-size:16px;color:#3c3c3c">1</div>
<div class="t" style="left:558px;top:331px;width:12px;text-align:center;font-size:16px;color:#3c3c3c">1</div>
<div class="t" style="left:702px;top:331px;width:12px;text-align:center;font-size:16px;color:#3c3c3c">2</div>
<div class="t" style="left:846px;top:331px;width:12px;text-align:center;font-size:16px;color:#3c3c3c">3</div>
<div class="t" style="left:990px;top:331px;width:12px;text-align:center;font-size:16px;color:#3c3c3c">4</div>
<div class="t" style="left:1134px;top:331px;width:12px;text-align:center;font-size:16px;color:#3c3c3c">5</div>
<div class="t" style="left:1278px;top:331px;width:12px;text-align:center;font-size:16px;color:#3c3c3c">6</div>
<div class="t" style="left:1422px;top:331px;width:12px;text-align:center;font-size:16px;color:#3c3c3c">7</div>
<svg style="left:410px;top:333px" width="20" height="18" viewBox="0 0 20 18"><rect x="1" y="1" width="18" height="5.5" fill="#3d7ae6"/><path d="M1 7.5H19L10 17Z" fill="#3d7ae6"/></svg>
<div class="a" style="left:421px;top:354px;width:3px;height:3px;background:#222"></div>
<svg style="left:1347px;top:342px" width="18" height="9" viewBox="0 0 18 9"><path d="M0 0H18L9 9Z" fill="#3d7ae6"/></svg>
<div class="a" style="left:0;top:165px;width:7px;height:835px;background:#f2f3f4"></div>
<div class="a" style="left:29px;top:355px;width:1px;height:653px;background:#6e6e6e"></div>
<div class="a" style="left:22px;top:367px;width:7px;height:1px;background:#666"></div>
<div class="t" style="left:6px;top:361px;width:16px;height:12px;text-align:center;font-size:16px;color:#3c3c3c;transform:rotate(-90deg);line-height:12px">1</div>
<div class="a" style="left:23px;top:385px;width:6px;height:1px;background:#6a6a6a"></div>
<div class="a" style="left:23px;top:403px;width:6px;height:1px;background:#6a6a6a"></div>
<div class="a" style="left:23px;top:421px;width:6px;height:1px;background:#6a6a6a"></div>
<div class="a" style="left:17px;top:439px;width:12px;height:1px;background:#6a6a6a"></div>
<div class="a" style="left:23px;top:457px;width:6px;height:1px;background:#6a6a6a"></div>
<div class="a" style="left:23px;top:475px;width:6px;height:1px;background:#6a6a6a"></div>
<div class="a" style="left:23px;top:493px;width:6px;height:1px;background:#6a6a6a"></div>
<div class="a" style="left:22px;top:511px;width:7px;height:1px;background:#666"></div>
<div class="t" style="left:6px;top:505px;width:16px;height:12px;text-align:center;font-size:16px;color:#3c3c3c;transform:rotate(-90deg);line-height:12px">2</div>
<div class="a" style="left:23px;top:529px;width:6px;height:1px;background:#6a6a6a"></div>
<div class="a" style="left:23px;top:547px;width:6px;height:1px;background:#6a6a6a"></div>
<div class="a" style="left:23px;top:565px;width:6px;height:1px;background:#6a6a6a"></div>
<div class="a" style="left:17px;top:583px;width:12px;height:1px;background:#6a6a6a"></div>
<div class="a" style="left:23px;top:601px;width:6px;height:1px;background:#6a6a6a"></div>
<div class="a" style="left:23px;top:619px;width:6px;height:1px;background:#6a6a6a"></div>
<div class="a" style="left:23px;top:637px;width:6px;height:1px;background:#6a6a6a"></div>
<div class="a" style="left:22px;top:655px;width:7px;height:1px;background:#666"></div>
<div class="t" style="left:6px;top:649px;width:16px;height:12px;text-align:center;font-size:16px;color:#3c3c3c;transform:rotate(-90deg);line-height:12px">3</div>
<div class="a" style="left:23px;top:673px;width:6px;height:1px;background:#6a6a6a"></div>
<div class="a" style="left:23px;top:691px;width:6px;height:1px;background:#6a6a6a"></div>
<div class="a" style="left:23px;top:709px;width:6px;height:1px;background:#6a6a6a"></div>
<div class="a" style="left:17px;top:727px;width:12px;height:1px;background:#6a6a6a"></div>
<div class="a" style="left:23px;top:745px;width:6px;height:1px;background:#6a6a6a"></div>
<div class="a" style="left:23px;top:763px;width:6px;height:1px;background:#6a6a6a"></div>
<div class="a" style="left:23px;top:781px;width:6px;height:1px;background:#6a6a6a"></div>
<div class="a" style="left:22px;top:799px;width:7px;height:1px;background:#666"></div>
<div class="t" style="left:6px;top:793px;width:16px;height:12px;text-align:center;font-size:16px;color:#3c3c3c;transform:rotate(-90deg);line-height:12px">4</div>
<div class="a" style="left:23px;top:817px;width:6px;height:1px;background:#6a6a6a"></div>
<div class="a" style="left:23px;top:835px;width:6px;height:1px;background:#6a6a6a"></div>
<div class="a" style="left:23px;top:853px;width:6px;height:1px;background:#6a6a6a"></div>
<div class="a" style="left:17px;top:871px;width:12px;height:1px;background:#6a6a6a"></div>
<div class="a" style="left:23px;top:889px;width:6px;height:1px;background:#6a6a6a"></div>
<div class="a" style="left:23px;top:907px;width:6px;height:1px;background:#6a6a6a"></div>
<div class="a" style="left:23px;top:925px;width:6px;height:1px;background:#6a6a6a"></div>
<div class="a" style="left:22px;top:943px;width:7px;height:1px;background:#666"></div>
<div class="t" style="left:6px;top:937px;width:16px;height:12px;text-align:center;font-size:16px;color:#3c3c3c;transform:rotate(-90deg);line-height:12px">5</div>
<div class="a" style="left:23px;top:961px;width:6px;height:1px;background:#6a6a6a"></div>
<div class="a" style="left:23px;top:979px;width:6px;height:1px;background:#6a6a6a"></div>
<div class="a" style="left:23px;top:997px;width:6px;height:1px;background:#6a6a6a"></div>

<div class="a" style="left:421.0px;top:347px;width:1px;height:7px;background:#5f5f5f"></div>
<div class="a" style="left:565.0px;top:347px;width:1px;height:7px;background:#5f5f5f"></div>
<div class="a" style="left:709.0px;top:347px;width:1px;height:7px;background:#5f5f5f"></div>
<div class="a" style="left:853.0px;top:347px;width:1px;height:7px;background:#5f5f5f"></div>
<div class="a" style="left:997.0px;top:347px;width:1px;height:7px;background:#5f5f5f"></div>
<div class="a" style="left:1141.0px;top:347px;width:1px;height:7px;background:#5f5f5f"></div>
<div class="a" style="left:1285.0px;top:347px;width:1px;height:7px;background:#5f5f5f"></div>
<!-- PAGE -->
<div class="a" style="left:30px;top:355px;width:1800px;height:645px;background:#f9f9fa"></div>
<div class="a" style="left:277px;top:355px;width:1226px;height:645px;background:#fff;border-left:1px solid #c4c4c4;border-right:1px solid #c4c4c4"></div>
<div class="a" style="left:56px;top:381px;width:51px;height:51px;border-radius:50%;background:#e9ecf0"></div>
<svg style="left:71px;top:399px" width="23" height="15" viewBox="0 0 23 15" fill="#444746"><circle cx="1.5" cy="2" r="1.5"/><circle cx="1.5" cy="7.5" r="1.5"/><circle cx="1.5" cy="13" r="1.5"/><rect x="5" y="1" width="18" height="2.3"/><rect x="5" y="6.4" width="18" height="2.3"/><rect x="5" y="11.8" width="18" height="2.3"/></svg>
<div class="a" style="left:1811px;top:391px;width:12px;height:50px;background:#dadce0;border-radius:2px"></div>
<div class="a" style="left:1914px;top:180px;width:1px;height:820px;background:#ececec"></div>
<!-- DOC TEXT -->
<div class="t doc" id="h1" style="left:423.0px;top:396.56px;font-weight:bold;text-decoration:underline;text-decoration-thickness:2px;text-underline-offset:3px;color:#1a1a1a;font-size:25px;letter-spacing:0.444px">Secondary Schools</div>
<div class="t doc" id="l1" style="left:495.8px;top:433.86px;font-weight:normal;color:#363636;font-size:25px;letter-spacing:0.739px">Personal Devices/Cell phones are not allowed in the classroom or during</div>
<div class="t doc" id="l2" style="left:494.3px;top:470.36px;font-weight:normal;color:#363636;font-size:25px;letter-spacing:1.000px">instruction time.</div>
<div class="t doc" id="l3" style="left:566.0px;top:507.06px;font-weight:normal;color:#363636;font-size:25px;letter-spacing:0.622px">MS must define packed and away (teacher or locker)</div>
<div class="t doc" id="l4" style="left:566.0px;top:543.86px;font-weight:normal;color:#363636;font-size:25px;letter-spacing:0.621px">HS must define packed and away</div>
<div class="t doc" id="l5" style="left:566.0px;top:580.56px;font-weight:normal;color:#363636;font-size:25px;letter-spacing:0.708px">General hesitation about ‘on person’ ie.. pockets</div>
<div class="t doc" id="l6" style="left:495.8px;top:617.56px;font-weight:normal;color:#363636;font-size:25px;letter-spacing:0.633px">Personal Devices/Cell phones can be used during passing time and lunch (MS??)</div>
<div class="t doc" id="l7" style="left:495.5px;top:653.86px;font-weight:normal;color:#363636;font-size:25px;letter-spacing:0.864px">No personal devices/phones in bathrooms during class- kept somewhere in</div>
<div class="t doc" id="l8" style="left:495.5px;top:690.56px;font-weight:normal;color:#363636;font-size:25px;letter-spacing:0.907px">class during bathroom breaks</div>
<div class="t doc" id="l9" style="left:495.5px;top:727.06px;font-weight:normal;color:#363636;font-size:25px;letter-spacing:0.611px">No personal devices/Cell phones used in class. Not for special occasions, etc...</div>
<div class="t doc" id="h2" style="left:422.4px;top:802.06px;font-weight:bold;color:#1a1a1a;font-size:25px;letter-spacing:0.371px">Elementary Schools</div>
<div class="t doc" id="l10" style="left:495.8px;top:838.06px;font-weight:normal;color:#363636;font-size:25px;letter-spacing:0.712px">Personal devices/Cell phones must be kept in a backpack, school box, or teacher</div>
<div class="t doc" id="l11" style="left:495.5px;top:874.76px;font-weight:normal;color:#363636;font-size:25px;letter-spacing:0.900px">closet/cupboard.</div>
<div class="t doc" id="l12" style="left:495.8px;top:911.56px;font-weight:normal;color:#363636;font-size:25px;letter-spacing:0.731px">Personal Devices/cell phones can only be used with teacher permission for</div>
<div class="t doc" id="l13" style="left:495.5px;top:948.06px;font-weight:normal;color:#363636;font-size:25px;letter-spacing:0.972px">communication home.</div>
<div class="t doc" id="colon" style="left:640.5px;top:802.06px;color:#2b2b2b;font-size:25px;letter-spacing:0px">:</div>
<div class="a" style="left:460px;top:443px;width:10px;height:10px;border-radius:50%;background:#222"></div>
<div class="a" style="left:460px;top:626.5px;width:10px;height:10px;border-radius:50%;background:#222"></div>
<div class="a" style="left:460px;top:663px;width:10px;height:10px;border-radius:50%;background:#222"></div>
<div class="a" style="left:460px;top:736.5px;width:10px;height:10px;border-radius:50%;background:#222"></div>
<div class="a" style="left:460px;top:847px;width:10px;height:10px;border-radius:50%;background:#222"></div>
<div class="a" style="left:460px;top:920px;width:10px;height:10px;border-radius:50%;background:#222"></div>
<div class="a" style="left:532px;top:516px;width:11px;height:11px;border-radius:50%;border:1.3px solid #333"></div>
<div class="a" style="left:532px;top:553px;width:11px;height:11px;border-radius:50%;border:1.3px solid #333"></div>
<div class="a" style="left:532px;top:589.5px;width:11px;height:11px;border-radius:50%;border:1.3px solid #333"></div>
<!-- SIDE PANEL -->
<svg style="left:1858px;top:279px" width="28" height="28" viewBox="0 0 28 28"><rect x="0" y="0" width="28" height="28" rx="2" fill="#4285f4"/><rect x="21" y="0" width="7" height="21" fill="#fbbc04"/><rect x="0" y="21" width="21" height="7" fill="#34a853"/><path d="M21 21H28L21 28Z" fill="#ea4335"/><rect x="21" y="0" width="7" height="7" fill="#1967d2"/><rect x="6" y="6" width="15" height="15" fill="#fff"/><text x="13.5" y="18" text-anchor="middle" font-family="Liberation Sans" font-size="10.5" fill="#4285f4">31</text></svg>
<svg style="left:1858px;top:363px" width="28" height="28" viewBox="0 0 28 28"><rect width="28" height="28" rx="2.5" fill="#fbbc04"/><circle cx="14" cy="12.5" r="5.5" fill="#fff"/><rect x="11.5" y="17" width="5" height="4.5" fill="#fff"/></svg>
<svg style="left:1859px;top:449px" width="27" height="25" viewBox="0 0 27 25" fill="none"><circle cx="12" cy="13" r="10" stroke="#1a73e8" stroke-width="4"/><path d="M7 12.5L11.5 17L24.5 3" stroke="#1a73e8" stroke-width="4" stroke-linejoin="round"/></svg>
<svg style="left:1862px;top:532px" width="21" height="25" viewBox="0 0 21 25"><circle cx="10.5" cy="5.5" r="4.8" fill="#1a56c4"/><path d="M1 19Q1 13 10.5 13Q20 13 20 19V24.5H1Z" fill="#1a56c4"/></svg>
<svg style="left:1863px;top:615px" width="19" height="27" viewBox="0 0 19 27"><path d="M9.5 26C6 20 1 15 1 9.5A8.5 8.5 0 0 1 18 9.5C18 15 13 20 9.5 26Z" fill="#34a853"/><path d="M2.5 4.6A8.5 8.5 0 0 1 9.5 1V6Z" fill="#ea4335"/><path d="M9.5 1A8.5 8.5 0 0 1 18 9.5L13 9.5Z" fill="#4285f4"/><path d="M1 9.5C1 12.5 2 15 3.7 17.5L9.5 11Z" fill="#fbbc04"/><path d="M1 9.5A8.5 8.5 0 0 1 2.5 4.6L6.5 8Z" fill="#ea4335"/><rect x="6.3" y="6.3" width="6.5" height="6.5" transform="rotate(45 9.5 9.5)" fill="#fff"/></svg>
<div class="a" style="left:1856px;top:692px;width:32px;height:1px;background:#dadce0"></div>
<svg style="left:1862px;top:752px" width="20" height="20" viewBox="0 0 20 20" stroke="#1f1f1f" stroke-width="2.4"><path d="M10 0V20M0 10H20"/></svg>
<svg style="left:1867px;top:953px" width="9" height="14" viewBox="0 0 9 14" fill="none" stroke="#444746" stroke-width="2.2"><path d="M1.5 1.5L7 7L1.5 12.5"/></svg>
<!-- cursor -->
<svg style="left:1314px;top:626px" width="14" height="25" viewBox="0 0 14 25" fill="none" stroke="#000" stroke-width="2"><path d="M2 1H12M2 24H12M7 1V24"/></svg>


<!-- TASKBAR -->
<div class="a" style="left:0;top:1000px;width:1920px;height:8px;background:#f3f3f3;border-top:2px solid #e4e4e4"></div>
<div id="taskbar" class="a"></div>
<div class="a" style="left:0;top:1008px;width:1920px;height:1.5px;background:#bfb2a6"></div>
<svg style="left:30px;top:1016px" width="50" height="46" viewBox="0 0 50 46"><defs><radialGradient id="sun" cx=".35" cy=".35" r=".7"><stop offset="0" stop-color="#f8b73a"/><stop offset="1" stop-color="#ef7418"/></radialGradient></defs><circle cx="17" cy="27" r="15" fill="url(#sun)"/><circle cx="27.5" cy="13" r="11.5" fill="#d3232e"/><text x="27.5" y="19" text-anchor="middle" font-family="Liberation Sans" font-size="16" fill="#fff">4</text></svg>
<div class="t" id="temp" style="left:76.7px;top:1022.76px;font-size:18px;color:#1b1b1b;letter-spacing:-1.066px">82°F</div>
<div class="t" id="sunny" style="left:75.7px;top:1046.46px;font-size:18px;color:#5a5a5a;letter-spacing:-0.175px">Sunny</div>
<svg style="left:575px;top:1027px" width="36" height="36" viewBox="0 0 36 36"><defs><linearGradient id="win" x1="0" y1="0" x2="1" y2="1"><stop offset="0" stop-color="#52d7fb"/><stop offset="1" stop-color="#0b67d3"/></linearGradient></defs><path d="M0 0H17V17H0ZM19 0H36V17H19ZM0 19H17V36H0ZM19 19H36V36H19Z" fill="url(#win)"/></svg>
<div class="a" style="left:635px;top:1022px;width:323px;height:44px;border-radius:22px;background:#faf4ef;border:1px solid #e7ddd4"></div>
<svg style="left:649px;top:1034px" width="23" height="22" viewBox="0 0 23 22" fill="none" stroke="#1b1b1b" stroke-width="2.3"><circle cx="9" cy="9" r="7.3"/><path d="M14.5 14.5L21 21"/></svg>
<div class="t" id="search" style="left:686.0px;top:1033.92px;font-size:21px;color:#5c5c5c;letter-spacing:-0.600px">Search</div>
<svg style="left:880px;top:1028px" width="72" height="34" viewBox="0 0 72 34"><ellipse cx="8" cy="10" rx="7" ry="4.5" fill="#a8dde8" opacity=".85"/><ellipse cx="64" cy="10" rx="7" ry="4.5" fill="#a8dde8" opacity=".85"/><ellipse cx="21" cy="21" rx="8.5" ry="9" fill="#e8b92c"/><path d="M14 19H28M14 24H28" stroke="#2b2210" stroke-width="2.2"/><ellipse cx="51" cy="21" rx="8.5" ry="9" fill="#e8b92c"/><path d="M44 19H58M44 24H58" stroke="#2b2210" stroke-width="2.2"/><path d="M29 3H43Q43 15 36 17Q29 15 29 3Z" fill="#e3954a"/><rect x="34.5" y="17" width="3" height="6" fill="#d9843b"/><rect x="31" y="23" width="10" height="3" fill="#d9843b"/></svg>
<svg style="left:978px;top:1025px" width="30" height="36" viewBox="0 0 30 36"><rect x="9" y="0" width="20" height="20" fill="#f3efe9" opacity=".8"/><rect x="0" y="10" width="28" height="25" rx="2" fill="#2b2522"/><rect x="9" y="10" width="19" height="16" fill="#bdbab6"/></svg>
<svg style="left:1044px;top:1027px" width="37" height="33" viewBox="0 0 37 33"><path d="M0 2A2 2 0 0 1 2 0H12L15 3H35A2 2 0 0 1 37 5V8H0Z" fill="#e1a80e"/><path d="M0 6H37V31A2 2 0 0 1 35 33H2A2 2 0 0 1 0 31Z" fill="#fcc73b"/><path d="M7 33V24A3 3 0 0 1 10 21H27A3 3 0 0 1 30 24V33Z" fill="#1d7ad0"/><rect x="12" y="24" width="13" height="2" fill="#0d4f8f"/></svg>
<div class="a" style="left:1103px;top:1016px;width:53px;height:56px;background:#f2ede5;border-radius:5px"></div>
<svg style="left:1111px;top:1025px" width="37" height="37" viewBox="0 0 37 37"><defs><linearGradient id="edg1" x1="0" y1="1" x2="1" y2="0"><stop offset="0" stop-color="#0c59a4"/><stop offset="1" stop-color="#1a9be0"/></linearGradient><linearGradient id="edg2" x1="0" y1="0" x2="1" y2="1"><stop offset="0" stop-color="#35c1f1"/><stop offset="1" stop-color="#66eb6e"/></linearGradient></defs><circle cx="18.5" cy="18.5" r="18" fill="url(#edg1)"/><path d="M2 14A17 17 0 0 1 36 17Q37 27 27 28Q18 28 19 21Q20 17 24 17Q14 10 2 14Z" fill="url(#edg2)"/><ellipse cx="22" cy="23" rx="5" ry="4" fill="#f2ede5"/></svg>
<div class="a" style="left:1117px;top:1068px;width:24px;height:4px;border-radius:2px;background:#0f6bc4"></div>
<svg style="left:1177px;top:1025px" width="35" height="36" viewBox="0 0 35 36"><path d="M10 6V4A3 3 0 0 1 13 1H22A3 3 0 0 1 25 4V6" fill="none" stroke="#4aa3e4" stroke-width="2.2"/><rect x="0" y="6" width="35" height="30" rx="3" fill="#1b4a8c"/><rect x="10" y="13" width="7" height="7" fill="#f25022"/><rect x="18" y="13" width="7" height="7" fill="#7fba00"/><rect x="10" y="21" width="7" height="7" fill="#00a4ef"/><rect x="18" y="21" width="7" height="7" fill="#ffb900"/></svg>
<svg style="left:1242px;top:1028px" width="37" height="31" viewBox="0 0 37 31"><path d="M10 4L28 1L37 8V28L14 31Z" fill="#0e72c9"/><path d="M14 14L37 8V28H14Z" fill="#4ab8f0"/><path d="M14 31L37 17V28Z" fill="#1490df"/><rect x="0" y="6" width="18" height="18" rx="2" fill="#0a5db3"/><circle cx="9" cy="15" r="5" fill="none" stroke="#fff" stroke-width="2.4"/></svg>
<svg style="left:1309px;top:1025px" width="37" height="37" viewBox="0 0 37 37"><path d="M18.5 0C33 0 37 4 37 18.5C37 33 33 37 18.5 37C4 37 0 33 0 18.5C0 4 4 0 18.5 0Z" fill="#0b5cff"/><text x="18.5" y="21" text-anchor="middle" font-family="Liberation Sans" font-size="10" fill="#fff">zoom</text></svg>
<div class="a" style="left:1325px;top:1068px;width:7px;height:4px;border-radius:2px;background:#6e6a60"></div>
<svg style="left:1546px;top:1038px" width="18" height="11" viewBox="0 0 18 11" fill="none" stroke="#1b1b1b" stroke-width="2"><path d="M1.5 9.5L9 2L16.5 9.5"/></svg>
<svg style="left:1590px;top:1034px" width="26" height="21" viewBox="0 0 26 21" fill="none" stroke="#2b2b2b" stroke-width="1.8"><path d="M6 19A5 5 0 0 1 5.5 9A7.5 7.5 0 0 1 19.5 7.5A5.8 5.8 0 0 1 20 19Z" fill="#cfc7bd"/><path d="M3 2L23 20"/></svg>
<svg style="left:1642px;top:1032px" width="18" height="24" viewBox="0 0 18 24" fill="none" stroke="#2962c4" stroke-width="2"><rect x="5" y="1" width="8" height="14" rx="4"/><path d="M1.5 11A7.5 7.5 0 0 0 16.5 11M9 18.5V23.5"/></svg>
<svg style="left:1686px;top:1031px" width="26" height="20" viewBox="0 0 26 20" fill="none" stroke="#2b2b2b" stroke-width="1.6"><rect x="1" y="3" width="16" height="16" rx="1.5"/><rect x="17" y="1" width="6" height="9" rx="1.5"/><path d="M20 10V19"/></svg>
<svg style="left:1723px;top:1035px" width="20" height="16" viewBox="0 0 20 16" fill="none" stroke="#2b2b2b" stroke-width="1.6"><path d="M1 5H5L10 1V15L5 11H1Z"/><path d="M13 5Q15 8 13 11M16 3Q19 8 16 13"/></svg>
<div class="t" id="clock" style="left:1790.8px;top:1022.46px;font-size:18px;color:#1b1b1b;letter-spacing:-0.367px">7:13 PM</div>
<div class="t" style="left:1793px;top:1046px;font-size:18px;color:#1b1b1b">5/27/2025</div>
<svg style="left:1871px;top:1030px" width="20" height="18" viewBox="0 0 20 18"><circle cx="8" cy="10" r="7" fill="#2b2b2b"/><text x="8" y="14" text-anchor="middle" font-family="Liberation Sans" font-weight="bold" font-size="9" fill="#eee">z</text><text x="16" y="8" font-family="Liberation Sans" font-weight="bold" font-size="8" fill="#2b2b2b">z</text></svg>
<div class="a" style="left:1664px;top:1040px;width:240px;height:32px;background:rgba(88,82,75,.88)"></div>
<div class="t" id="stamp" style="left:1675.8px;top:1045.99px;font-size:19.5px;font-weight:bold;color:#fff;letter-spacing:1.894px">2025-05-27 19:13:29</div>


<!-- VIDEO OVERLAY -->
<svg style="left:1600px;top:0px" width="320" height="180" viewBox="0 0 320 180">
<defs>
<linearGradient id="flr" x1="0" y1="0" x2="0" y2="1"><stop offset="0" stop-color="#c9c4b6"/><stop offset="1" stop-color="#c2b49c"/></linearGradient>
<linearGradient id="glass" x1="0" y1="0" x2="1" y2="1"><stop offset="0" stop-color="#8ad6dc"/><stop offset="1" stop-color="#47aeb6"/></linearGradient>
<filter id="bl" x="-5%" y="-5%" width="110%" height="110%"><feGaussianBlur stdDeviation="0.8"/></filter>
</defs>
<g filter="url(#bl)">
<rect width="320" height="180" fill="url(#flr)"/>
<!-- back wall -->
<path d="M0 0H320V36L276 26V70L210 60L160 50L104 44L0 50Z" fill="#d6d6d2"/>
<rect x="0" y="0" width="52" height="30" fill="#d0cec8"/>
<rect x="0" y="17" width="12" height="11" fill="#d9cf45"/>
<rect x="13" y="15" width="5" height="14" fill="#2f2a28"/>
<rect x="0" y="30" width="42" height="20" fill="#34302d"/>
<rect x="42" y="22" width="10" height="28" fill="#2c2a29"/>
<!-- door -->
<rect x="52" y="0" width="52" height="50" fill="#b4b8b8"/>
<rect x="56" y="0" width="20" height="24" fill="#a6d6d8"/>
<rect x="81" y="0" width="17" height="44" fill="#c9d6d3"/>
<rect x="52" y="0" width="4" height="50" fill="#1c3838"/>
<rect x="76" y="0" width="5" height="50" fill="#1c3838"/>
<rect x="98" y="0" width="5" height="42" fill="#243c3c"/>
<!-- posters -->
<rect x="112" y="0" width="8" height="8" fill="#b53a44"/><rect x="124" y="1" width="7" height="8" fill="#c24a56"/><rect x="135" y="2" width="6" height="9" fill="#6a3a44"/>
<rect x="118" y="11" width="6" height="7" fill="#b84250"/><rect x="129" y="12" width="6" height="8" fill="#3c9a60"/>
<!-- windows -->
<path d="M158 7L206 14L203 56L158 52Z" fill="#1f2c2b"/>
<path d="M161 10L203 17L200 53L161 49Z" fill="url(#glass)"/>
<path d="M210 16L277 24L271 68L208 62Z" fill="#1f2c2b"/>
<path d="M213 19L273 27L268 65L211 59Z" fill="url(#glass)"/>
<!-- right wall / whiteboard -->
<path d="M276 0H320V150L300 130L278 90Z" fill="#d3d3d0"/>
<path d="M289 30L320 36V100L289 92Z" fill="#e3e4e4"/>
<rect x="288" y="35" width="10" height="18" fill="#3a4048"/>
<!-- back chairs -->
<rect x="112" y="33" width="13" height="11" fill="#26282e"/><rect x="128" y="33" width="12" height="12" fill="#26282e"/>
<!-- people -->
<rect x="162" y="33" width="9" height="16" fill="#dedcd6"/><rect x="190" y="42" width="11" height="10" fill="#e6e4de"/>
<rect x="232" y="56" width="14" height="12" fill="#e2e0da"/><rect x="246" y="60" width="16" height="14" fill="#5a5048"/>
<!-- back table -->
<path d="M80 42L160 50L215 62L220 66L160 56L80 49Z" fill="#cdbf9e"/>
<path d="M82 49V72M134 54V70M160 57V75M212 66V78" stroke="#4a4a4a" stroke-width="1"/>
<!-- left chairs (navy) -->
<path d="M0 40L14 42L35 56L36 72L30 92L24 110L20 128H0Z" fill="#2c3a5a"/>
<path d="M3 58H34M2 76H33M1 94H28M1 112H22" stroke="#1e2842" stroke-width="1.5"/>
<!-- floor mats -->
<path d="M38 64H60L62 70H40Z" fill="#6c9480"/>
<path d="M87 83H112L110 90H86Z" fill="#6d9682"/>
<path d="M44 101H60V107H44Z" fill="#a6987e"/>
<rect x="0" y="129" width="40" height="19" fill="#547e6c"/>
<!-- right chairs -->
<path d="M280 70L310 76L318 100L300 104L284 92Z" fill="#2c3a5a"/>
<rect x="288" y="100" width="17" height="28" fill="#d8c646"/>
<!-- under-table dark -->
<path d="M96 96L152 124L156 150L132 152L100 132Z" fill="#2f2c29"/><path d="M100 130L90 145M118 142L108 172M140 150L128 178M152 148L160 170" stroke="#4a4540" stroke-width="1.5"/><path d="M140 125L165 140L160 180H150L138 150Z" fill="#383430"/>
<path d="M175 92L237 112L228 122L180 108Z" fill="#2e2c2a"/>
<path d="M240 115L290 120L292 140L262 145Z" fill="#34302c"/>
<path d="M160 145L185 180H160Z" fill="#2c2a28"/>
<path d="M290 145L320 135V180H285Z" fill="#2f2c29"/>
<!-- table 3 (middle right) -->
<path d="M167 67L232 76L290 118L240 115L178 90Z" fill="#d5c29c"/>
<!-- table 1 -->
<path d="M96 90L218 120L178 140L96 96Z" fill="#d3bb90"/>
<path d="M96 96L178 140V144L95 100Z" fill="#3d3a36"/>
<!-- table 2 -->
<path d="M219 116L295 126L256 180H190L164 148Z" fill="#d5bd90"/>
<path d="M164 148L200 180H192L162 151Z" fill="#3d3a36"/>
<!-- papers / green -->
<path d="M134 107L158 113L155 119L131 113Z" fill="#5a9a72"/>
<path d="M112 98L128 101L126 105L110 102Z" fill="#e4e4e0"/>
<path d="M152 118L170 122L168 126L150 122Z" fill="#e2e2de"/>
<path d="M193 145L222 138L224 148L196 156Z" fill="#2f9444"/>
<path d="M227 125L247 121L249 131L229 134Z" fill="#389a4c"/>
<path d="M236 98L250 108L246 110L232 100Z" fill="#3a9a52"/>
<path d="M256 137L282 142L280 151L254 146Z" fill="#e6e5e2"/>
<path d="M235 155L262 160L260 171L233 166Z" fill="#e8e7e3"/>
<path d="M248 102L262 104L260 108L246 106Z" fill="#e0e0dc"/>
</g>
<!-- label -->
<rect x="0" y="148" width="108" height="32" fill="#5f5246" opacity=".88"/>
</svg>
<div class="t" id="vlabel" style="left:1605.0px;top:155.33px;font-size:16.5px;font-weight:bold;color:#fff;letter-spacing:-0.710px">School Board</div>

</body></html>
